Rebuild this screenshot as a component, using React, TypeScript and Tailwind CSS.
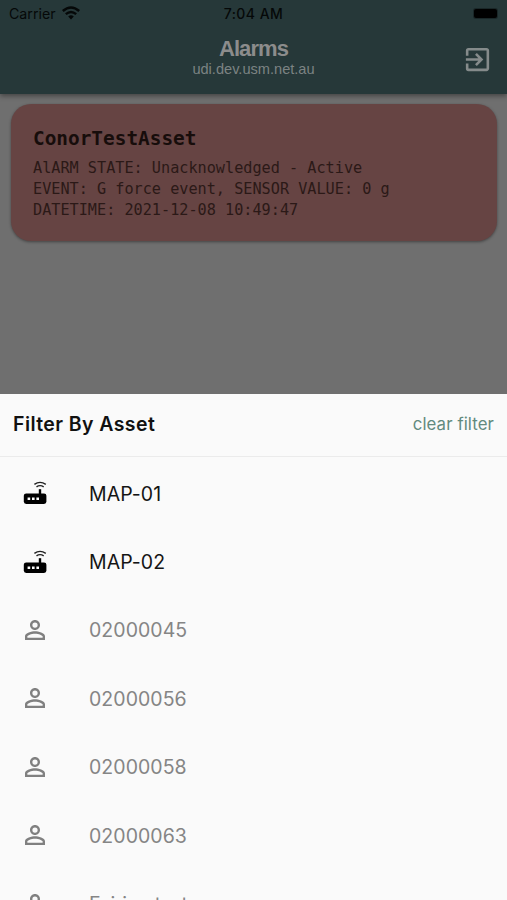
import { MdExitToApp, MdPersonOutline } from "react-icons/md";

const inter = "font-['Inter','Liberation_Sans',sans-serif]";

type Asset = { name: string; kind: "router" | "person" };

const assets: Asset[] = [
  { name: "MAP-01", kind: "router" },
  { name: "MAP-02", kind: "router" },
  { name: "02000045", kind: "person" },
  { name: "02000056", kind: "person" },
  { name: "02000058", kind: "person" },
  { name: "02000063", kind: "person" },
  { name: "Fairing test", kind: "person" },
];

function RouterIcon() {
  return (
    <svg viewBox="0 0 24 24" className="h-6 w-6" fill="none">
      <rect x="0.8" y="12.4" width="22.6" height="10.6" rx="2.4" fill="#000" />
      <path d="M17 13V8.2" stroke="#000" strokeWidth="2.4" />
      <path d="M11.4 3.4Q17 -0.6 22.8 3.4M13.5 5.9Q17 3.4 20.7 5.9" stroke="#222" strokeWidth="1.4" />
      <path d="M4.6 16.4h2.6v2.6H4.6zM9 16.4h2.6v2.6H9zM13.4 16.4h2.6v2.6h-2.6z" fill="#fff" />
    </svg>
  );
}

function WifiIcon() {
  return (
    <svg viewBox="0 0 18 14" className="ml-[6px] h-[14px] w-[18px]" fill="none" stroke="#050808">
      <path d="M0.8 5Q9 -2 17.2 5" strokeWidth="2.6" />
      <path d="M3.8 8.1Q9 3.7 14.2 8.1" strokeWidth="2.4" />
      <path d="M6.2 10.5Q9 8 11.8 10.5L9 13.4Z" fill="#050808" stroke="none" />
    </svg>
  );
}

function AssetRow({ asset }: { asset: Asset }) {
  const router = asset.kind === "router";
  const tracking = /^[A-Z][a-z]/.test(asset.name) ? "tracking-[-0.3px]" : "tracking-[0.05px]";
  return (
    <li className="flex h-[68.4px] shrink-0 items-center pl-[23px]">
      <span className="flex w-[66px] items-center pb-[2px]">
        {router ? <RouterIcon /> : <MdPersonOutline className="-ml-[3px] size-[30px] text-[#808080]" />}
      </span>
      <span className={`text-[19.5px] ${tracking} ${router ? "text-[#151515]" : "text-[#858585]"}`}>
        {asset.name}
      </span>
    </li>
  );
}

export default function App() {
  return (
    <div className={`flex h-[900px] w-[507px] flex-col overflow-hidden bg-[#6f6f6f] ${inter}`}>
      <header className="flex h-[94px] shrink-0 flex-col bg-[#263839] shadow-[0_2px_5px_rgba(0,0,0,0.4)]">
        <div className="grid h-7 grid-cols-3 items-center pl-[9px] pr-[10px] text-[#050808]">
          <div className="-mt-px flex items-center text-[14.2px]">
            Carrier
            <WifiIcon />
          </div>
          <div className="-mt-px pl-px text-center text-[14px] font-medium tracking-[0.45px]">7:04 AM</div>
          <div className="-mt-[2px] flex justify-end">
            <span className="h-[9px] w-[23px] rounded-[2px] bg-black ring-1 ring-[#1a2728]" />
          </div>
        </div>
        <div className="grid h-[66px] grid-cols-[60px_1fr_60px] font-['Liberation_Sans',sans-serif]">
          <span />
          <div className="flex flex-col items-center pt-[8px] text-[#8c8c8c]">
            <h1 className="text-[22px] font-bold leading-[25px] tracking-[-0.9px]">Alarms</h1>
            <p className="text-[14.6px] leading-[17px] text-[#7c8383]">udi.dev.usm.net.au</p>
          </div>
          <MdExitToApp className="ml-[15px] mt-[16px] size-[31px] text-[#858b8b]" />
        </div>
      </header>

      <main className="flex h-[300px] shrink-0 flex-col pl-[11px] pr-[10px] pt-[10px] font-['DejaVu_Sans_Mono',monospace]">
        <article className="h-[137px] rounded-[20px] bg-[#664443] pl-[22px] pt-[22px] shadow-[0_1px_3px_rgba(0,0,0,0.4)]">
          <h2 className="text-[19.4px] font-bold leading-[26px] text-[#170d0b]">ConorTestAsset</h2>
          <div className="mt-[6px] whitespace-pre text-[15.2px] leading-[20.8px] text-[#2b1917]">
            <p>AlARM STATE: Unacknowledged - Active</p>
            <p>EVENT: G force event, SENSOR VALUE: 0 g</p>
            <p>DATETIME: 2021-12-08 10:49:47</p>
          </div>
        </article>
      </main>

      <section className="flex min-h-0 flex-1 flex-col overflow-hidden bg-[#fafafa]">
        <div className="flex h-[63px] shrink-0 items-center justify-between border-b border-[#ebebeb] pl-[13px] pr-[13px]">
          <h2 className="text-[19.5px] font-semibold tracking-[0.42px] text-[#111]">Filter By Asset</h2>
          <button className="text-[16.8px] tracking-[0.1px] text-[#628a7e]">clear filter</button>
        </div>
        <ul className="flex flex-col pt-[3px]">
          {assets.map((asset) => (
            <AssetRow key={asset.name} asset={asset} />
          ))}
        </ul>
      </section>
    </div>
  );
}
